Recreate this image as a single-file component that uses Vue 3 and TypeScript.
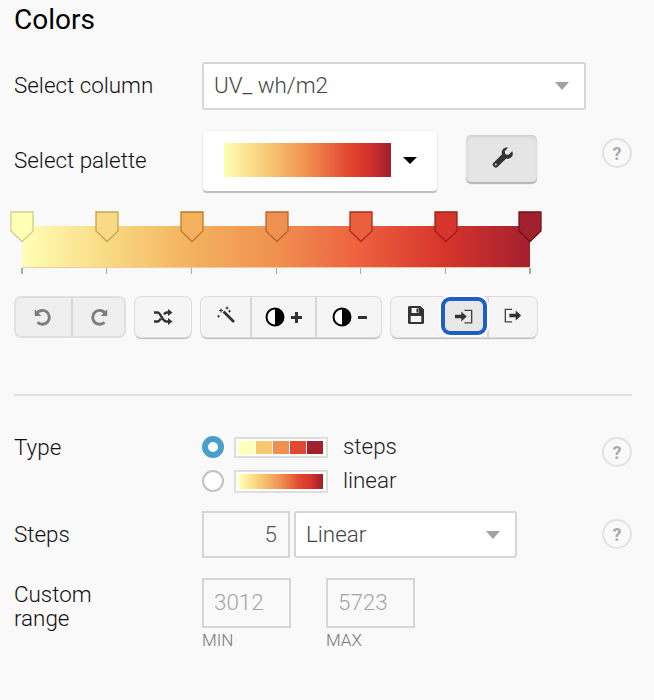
<template>
  <div class="panel">
    <h2 class="heading">Colors</h2>

    <div class="row column-row">
      <label class="label">Select column</label>
      <div class="select column-select">
        <span>UV_ wh/m2</span>
        <i class="arrow"></i>
      </div>
    </div>

    <div class="row palette-row">
      <label class="label">Select palette</label>
      <div class="palette-select">
        <div class="palette-preview"></div>
        <i class="caret"></i>
      </div>
      <button class="btn wrench-btn" aria-label="Edit palette">
        <svg width="24" height="24" viewBox="0 0 24 24">
          <path fill="#333" d="M22.600 6.200c.5 1.700.1 3.700-1.300 5-1.400 1.400-3.400 1.800-5.100 1.200L7.500 21.100c-.9.900-2.300.9-3.200 0l-1-1c-.9-.9-.9-2.300 0-3.200l8.700-8.700c-.6-1.700-.2-3.700 1.200-5.100 1.300-1.300 3.200-1.800 4.900-1.300l-3.400 3.400.6 3.100 3.100.6 3.700-3.700z" />
          <circle cx="5.800" cy="18.600" r="1" fill="#e4e4e4" />
        </svg>
      </button>
      <span class="help palette-help">?</span>
    </div>

    <div class="scale">
      <div class="scale-bar"></div>
      <span
        v-for="(h, i) in handles"
        :key="i"
        class="handle"
        :style="{ left: h.pos + 'px' }"
      >
        <svg width="24" height="32" viewBox="0 0 24 32">
          <path :fill="h.fill" :stroke="h.line" stroke-width="1.300" d="M1 1h22v19L12 30.500 1 20z" />
        </svg>
      </span>
      <div class="ticks">
        <i v-for="(h, i) in handles" :key="i" class="tick" :style="{ left: h.pos + 'px' }"></i>
      </div>
    </div>

    <div class="toolbar">
      <div class="group muted">
        <button class="tool w56">
          <svg width="22" height="22" viewBox="0 0 20 20" fill="none" stroke="#7d7d7d" stroke-width="2.600">
            <path d="M4.300 6.700A6.300 6.300 0 1 1 5 14.800" />
            <path fill="#7d7d7d" stroke="none" d="M2.500 3l6 6h-6z" />
          </svg>
        </button>
        <button class="tool w54">
          <svg width="22" height="22" viewBox="0 0 20 20" fill="none" stroke="#7d7d7d" stroke-width="2.600">
            <path d="M15.700 6.700A6.300 6.300 0 1 0 15 14.800" />
            <path fill="#7d7d7d" stroke="none" d="M17.500 3l-6 6h6z" />
          </svg>
        </button>
      </div>

      <div class="group">
        <button class="tool w56">
          <svg width="20" height="20" viewBox="0 0 20 20" fill="none" stroke="#333" stroke-width="2.400">
            <path d="M1 5.500h3.500c3.500 0 4.500 9 9 9H16M1 14.500h3.500c1.500 0 2.500-1.500 3.300-3M11 7.500c.7-1.200 1.500-2 2.500-2H16" />
            <path fill="#333" stroke="none" d="M15 2l4.500 3.500L15 9zM15 11l4.500 3.500L15 18z" />
          </svg>
        </button>
      </div>

      <div class="group">
        <button class="tool w49">
          <svg class="raised" width="20" height="20" viewBox="0 0 20 20">
            <path stroke="#333" stroke-width="2.600" d="M7.500 6.500l10.500 10.500" />
            <path stroke="#333" stroke-width="1.100" d="M3 5.500h4M5 3.500v4M11 1.500v3M9.500 3h3M13.500 5v2.500M12.300 6.200h2.500M2.500 10v2.500M1.300 11.200h2.500" />
          </svg>
        </button>
        <button class="tool w65">
          <svg class="adjust" width="20" height="20" viewBox="0 0 20 20">
            <circle cx="10" cy="10" r="8.500" fill="#fff" stroke="#000" stroke-width="2" />
            <path d="M10 1.500a8.500 8.500 0 0 1 0 17z" />
          </svg>
          <svg width="11" height="11" viewBox="0 0 11 11"><path fill="#333" d="M4 0h3v4h4v3H7v4H4V7H0V4h4z" /></svg>
        </button>
        <button class="tool w66">
          <svg class="adjust" width="20" height="20" viewBox="0 0 20 20">
            <circle cx="10" cy="10" r="8.500" fill="#fff" stroke="#000" stroke-width="2" />
            <path d="M10 1.500a8.500 8.500 0 0 1 0 17z" />
          </svg>
          <svg width="9" height="11" viewBox="0 0 9 11"><path fill="#333" d="M0 4h9v3H0z" /></svg>
        </button>
      </div>

      <div class="group">
        <button class="tool w50">
          <svg class="raised" width="16" height="18" viewBox="0 0 18 18" preserveAspectRatio="none">
            <path fill="#333" fill-rule="evenodd" d="M1.500 0H14l4 3.500v13c0 .8-.7 1.500-1.500 1.500h-15C.7 18 0 17.300 0 16.500v-15C0 .7.700 0 1.500 0zM4 2v5h8V2zM9.500 2.500h2v4h-2zM3 10v6h12v-6z" />
          </svg>
        </button>
        <button class="tool w46 focused">
          <svg width="18" height="15" viewBox="0 0 20 18" preserveAspectRatio="none">
            <path fill="none" stroke="#444" stroke-width="1.500" d="M10.500 1.500h8v15h-8" />
            <path fill="#333" d="M0 7h7V3l6 6-6 6v-4H0z" />
          </svg>
        </button>
        <button class="tool w50">
          <svg class="raised" width="18" height="15" viewBox="0 0 20 18" preserveAspectRatio="none">
            <path fill="none" stroke="#444" stroke-width="1.500" d="M9 1.500H1.500v15H9" />
            <path fill="#333" d="M6 7h7V3l6 6-6 6v-4H6z" />
          </svg>
        </button>
      </div>
    </div>

    <hr class="rule" />

    <div class="row type-row">
      <label class="label">Type</label>
      <div class="type-options">
        <div class="option">
          <span class="radio on"></span>
          <span class="swatch">
            <i v-for="c in steps" :key="c" class="step" :style="{ background: c }"></i>
          </span>
          <span class="option-text">steps</span>
        </div>
        <div class="option">
          <span class="radio"></span>
          <span class="swatch tall"><i class="ramp"></i></span>
          <span class="option-text">linear</span>
        </div>
      </div>
      <span class="help type-help">?</span>
    </div>

    <div class="row steps-row">
      <label class="label">Steps</label>
      <div class="input steps-input">5</div>
      <div class="select steps-select">
        <span>Linear</span>
        <i class="arrow"></i>
      </div>
      <span class="help steps-help">?</span>
    </div>

    <div class="row range-row">
      <label class="label range-label">Custom<br />range</label>
      <div class="range-field">
        <div class="input range-input">3012</div>
        <small>MIN</small>
      </div>
      <div class="range-field">
        <div class="input range-input">5723</div>
        <small>MAX</small>
      </div>
    </div>
  </div>
</template>

<script setup lang="ts">
interface Handle {
  pos: number;
  fill: string;
  line: string;
}

const handles: Handle[] = [
  { pos: 0, fill: "#ffffb6", line: "#cfcf86" },
  { pos: 85, fill: "#f9d983", line: "#c4a654" },
  { pos: 170, fill: "#f4b25f", line: "#bd7a2a" },
  { pos: 255, fill: "#f09050", line: "#b5652a" },
  { pos: 339, fill: "#ec5f3e", line: "#a82e1a" },
  { pos: 424, fill: "#d6352b", line: "#9a1f16" },
  { pos: 508, fill: "#a3202e", line: "#701114" },
];

const steps = ["#ffffb6", "#f9c873", "#f09050", "#e2472f", "#a3202e"];
</script>

<style>
html,
body {
  background: #f9f9f9;
}
</style>

<style scoped>
.panel {
  height: 700px;
  box-sizing: border-box;
  padding: 7px 22px 0 14px;
  font-family: Roboto, "Liberation Sans", sans-serif;
  font-weight: 300;
  color: #111;
  overflow: hidden;
}

.heading {
  margin: 0;
  height: 28px;
  font-size: 28px;
  line-height: 26px;
  font-weight: 400;
  color: #000;
}

.row {
  display: flex;
  align-items: center;
  position: relative;
}

.label {
  width: 188px;
  flex: none;
  padding-bottom: 2px;
  font-size: 22.4px;
  font-weight: 300;
  color: #111;
}

/* form controls */
.select {
  display: flex;
  align-items: center;
  justify-content: space-between;
  box-sizing: border-box;
  padding-bottom: 2px;
  background: #fff;
  border: 2px solid #d6d6d6;
  border-radius: 3px;
  font-size: 22.4px;
  color: #444;
}

.arrow {
  margin-top: 2px;
  width: 0;
  height: 0;
  border-left: 7px solid transparent;
  border-right: 7px solid transparent;
  border-top: 8px solid #a2a2a2;
}

.column-row {
  margin-top: 27px;
}

.column-select {
  width: 384px;
  height: 48px;
  padding-left: 10px;
  padding-right: 15px;
}

.palette-row {
  margin-top: 21px;
  height: 59px;
}

.palette-select {
  display: flex;
  align-items: center;
  box-sizing: border-box;
  margin-left: 1px;
  width: 234px;
  height: 60px;
  padding: 0 20px 2px 21px;
  background: #fff;
  border-radius: 4px;
  box-shadow: 0 2px 1px #bdbdbd, 0 0 2px #ddd;
}

.palette-preview {
  width: 168px;
  height: 34px;
  background: linear-gradient(to right, #ffffb6, #f7cc75 25%, #f09050 50%, #e2472f 75%, #d6352b 85%, #a01f2d);
}

.caret {
  margin: 2px 0 0 12px;
  width: 0;
  height: 0;
  border-left: 7px solid transparent;
  border-right: 7px solid transparent;
  border-top: 7px solid #000;
}

.wrench-btn {
  margin: 0 0 5px 29px;
  width: 71px;
  height: 47px;
  padding: 0;
  display: flex;
  align-items: center;
  justify-content: center;
  border: none;
  border-radius: 5px;
  background: #e5e5e5;
  box-shadow: inset 0 2px 3px #cfcfcf, 0 2px 1px #b5b5b5;
}

.help {
  position: absolute;
  left: 588px;
  box-sizing: border-box;
  width: 30px;
  height: 30px;
  display: flex;
  align-items: center;
  justify-content: center;
  border: 2px solid #e2e2e2;
  border-radius: 50%;
  font-size: 18px;
  font-weight: 700;
  color: #a9a9a9;
}

.palette-help {
  top: 7px;
}

/* colour scale */
.scale {
  position: relative;
  margin: 21px 0 0 8px;
  width: 508px;
  height: 63px;
  padding-top: 15px;
  box-sizing: border-box;
}

.scale-bar {
  height: 42px;
  background: linear-gradient(to right, #ffffb6, #f9d983 17%, #f4b25f 33%, #f09050 50%, #ec5f3e 67%, #d6352b 83%, #a3202e);
  border-bottom: 1px solid #f5c9a0;
  box-sizing: border-box;
}

.handle {
  position: absolute;
  top: 0;
  margin-left: -12px;
  line-height: 0;
}

.ticks {
  position: relative;
  height: 6px;
}

.tick {
  position: absolute;
  top: 0;
  margin-left: -1px;
  width: 1px;
  height: 6px;
  background: #a8a8a8;
}

.tick:first-child,
.tick:last-child {
  width: 2px;
}

/* toolbar */
.toolbar {
  display: flex;
  gap: 10px;
  margin: 23px 0 0 1px;
}

.group {
  display: flex;
  height: 40px;
  border-radius: 6px;
  background: #f5f5f5;
  box-shadow: 0 0 0 1px #dcdcdc, 0 2px 1px #b8b8b8;
}

.group.muted {
  background: #efefef;
  box-shadow: 0 0 0 1px #e0e0e0, inset 0 0 0 1px #e0e0e0;
}

.tool {
  display: flex;
  align-items: center;
  justify-content: center;
  gap: 6px;
  height: 40px;
  padding: 0;
  border: none;
  border-left: 2px solid #d8d8d8;
  background: transparent;
  box-sizing: border-box;
}

.tool:first-child {
  border-left: none;
}

.w46 { width: 46px; }
.w49 { width: 49px; }
.w50 { width: 50px; }
.w54 { width: 54px; }
.w56 { width: 56px; }
.w65 { width: 65px; }
.w66 { width: 66px; }

.adjust {
  fill: #000;
}

.raised {
  margin-bottom: 4px;
}

.focused {
  position: relative;
  height: 38px;
  border: 4px solid #1f5fc4;
  border-radius: 9px;
  background: #e8e8e8;
  box-shadow: 0 0 0 2px #fff;
}

.rule {
  margin: 57px 0 0;
  border: none;
  border-top: 2px solid #e0e0e0;
}

/* type options */
.type-row {
  margin-top: 37px;
  align-items: flex-start;
  height: 67px;
}

.type-row .label {
  line-height: 28px;
}

.type-options {
  display: flex;
  flex-direction: column;
  gap: 6px;
}

.option {
  display: flex;
  align-items: center;
  height: 28px;
}

.radio {
  box-sizing: border-box;
  width: 22px;
  height: 22px;
  border: 2px solid #c2c2c2;
  border-radius: 50%;
  background: #fff;
}

.radio.on {
  border: 6px solid #4a9fca;
}

.swatch {
  display: flex;
  gap: 1px;
  box-sizing: border-box;
  margin-left: 10px;
  width: 94px;
  height: 21px;
  padding: 2px 3px;
  border: 2px solid #dedede;
  background: #fff;
}

.swatch.tall {
  height: 23px;
}

.step {
  flex: 1;
}

.ramp {
  flex: 1;
  background: linear-gradient(to right, #ffffb6, #f7cc75 25%, #f09050 50%, #e2472f 72%, #d6352b 85%, #a01f2d);
}

.option-text {
  margin: 0 0 2px 15px;
  font-size: 22.4px;
  color: #222;
}

.type-help {
  top: 4px;
}

.input {
  display: flex;
  align-items: center;
  box-sizing: border-box;
  padding-bottom: 2px;
  border: 2px solid #d6d6d6;
  font-size: 22.4px;
}

/* steps */
.steps-row {
  margin-top: 11px;
}

.steps-input {
  width: 88px;
  height: 47px;
  justify-content: flex-end;
  padding-right: 11px;
  color: #555;
}

.steps-select {
  margin-left: 4px;
  width: 223px;
  height: 47px;
  padding-left: 10px;
  padding-right: 15px;
}

.steps-help {
  top: 8px;
}

/* range */
.range-row {
  margin-top: 20px;
  align-items: flex-start;
  gap: 35px;
}

.range-row .label {
  margin-right: -35px;
  padding-top: 4px;
  line-height: 24px;
}

.range-field {
  display: flex;
  flex-direction: column;
}

.range-input {
  width: 89px;
  height: 50px;
  padding-left: 10px;
  color: #a5a5a5;
}

.range-field small {
  margin-top: 3px;
  font-size: 17px;
  line-height: 18px;
  color: #777;
}
</style>
